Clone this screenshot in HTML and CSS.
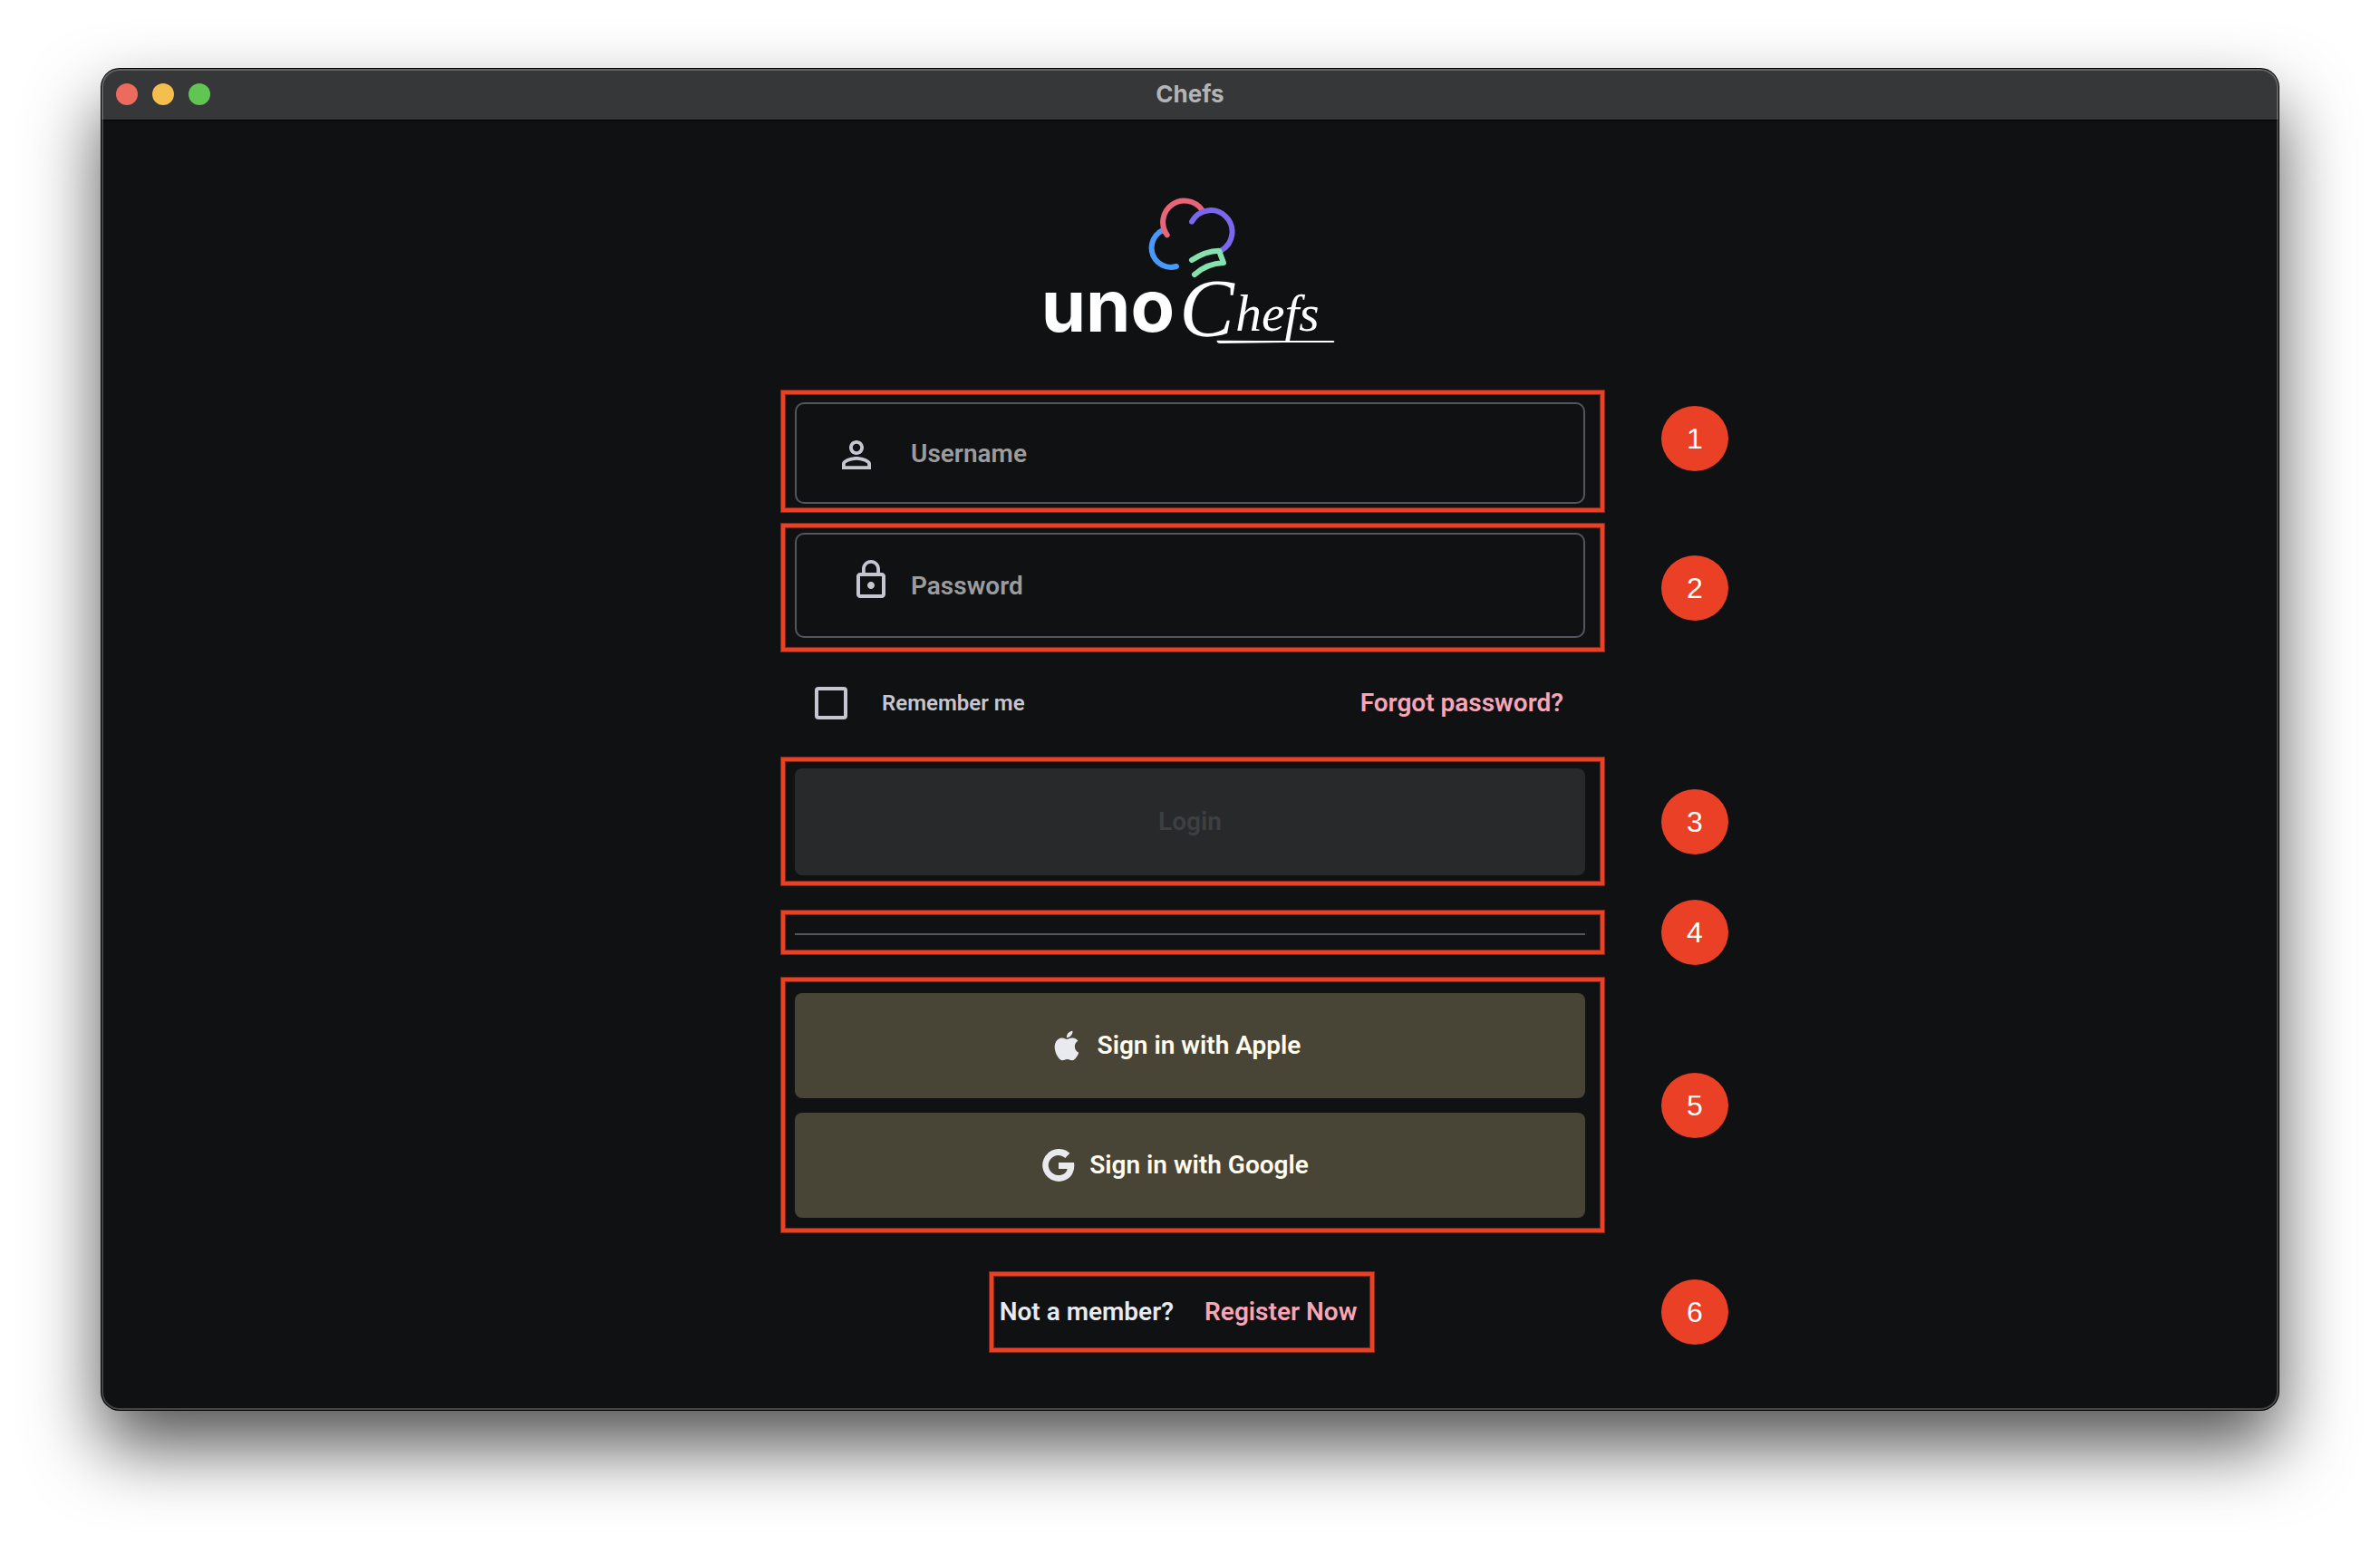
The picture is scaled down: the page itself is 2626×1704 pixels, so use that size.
FILE: index.html
```html
<!DOCTYPE html>
<html lang="en">
<head>
<meta charset="utf-8">
<meta name="viewport" content="width=device-width, initial-scale=1">
<title>Chefs</title>
<link rel="stylesheet" href="styles.css">
</head>
<body>
<div class="window">
  <header class="titlebar">
    <div class="lights">
      <span class="light light-close"></span>
      <span class="light light-minimize"></span>
      <span class="light light-zoom"></span>
    </div>
    <h1 class="title">Chefs</h1>
  </header>
  <main class="content">
    <svg class="logo" viewBox="0 0 1080 600" role="img" aria-label="Uno Chefs">
      <g fill="none" stroke-width="18">
        <path stroke="#4899fb" stroke-linecap="round" d="M456 164A64 64 0 0 0 504 282"/>
        <path stroke="#ea6478" stroke-linecap="round" d="M588 94A71 71 0 1 0 473 178"/>
        <path stroke="#7b67ee" stroke-linecap="round" d="M555 134A71 71 0 1 1 653 229"/>
        <path stroke="#85e2ae" stroke-linecap="round" stroke-linejoin="round" d="M555 261Q600 231 645 230L660 270Q605 272 564 309"/>
      </g>
      <text class="logo-uno" x="56" y="498">uno</text>
      <text class="logo-script logo-initial" x="514" y="512">C</text>
      <text class="logo-script" x="700" y="494">hefs</text>
      <path fill="#fff" d="M638 527L780 528L1024 528Q1030 531 1024 534L860 534L650 537Q636 536 638 527Z"/>
    </svg>

    <form class="form">
      <div class="row row-username">
        <div class="frame">
          <div class="field">
            <label class="field-icon" for="username" aria-label="Username">
              <svg viewBox="0 0 24 24"><path d="M12 5.9a2.1 2.1 0 1 1 0 4.2 2.1 2.1 0 0 1 0-4.2m0 9c2.97 0 6.1 1.46 6.1 2.1v1.1H5.9V17c0-.64 3.13-2.1 6.1-2.1M12 4C9.790 4 8 5.790 8 8s1.790 4 4 4 4-1.790 4-4-1.790-4-4-4zm0 9c-2.670 0-8 1.340-8 4v3h16v-3c0-2.660-5.330-4-8-4z"/></svg>
            </label>
            <input class="field-input" id="username" type="text" placeholder="Username">
          </div>
        </div>
        <span class="badge">1</span>
      </div>

      <div class="row row-password">
        <div class="frame">
          <div class="field">
            <label class="field-icon" for="password" aria-label="Password">
              <svg viewBox="0 0 24 24"><path d="M12 17c1.100 0 2-.900 2-2s-.900-2-2-2-2 .900-2 2 .900 2 2 2zm6-9h-1V6c0-2.760-2.240-5-5-5S7 3.240 7 6v2H6c-1.100 0-2 .900-2 2v10c0 1.100.900 2 2 2h12c1.100 0 2-.900 2-2V10c0-1.100-.900-2-2-2zM8.900 6c0-1.710 1.390-3.100 3.100-3.100s3.100 1.390 3.100 3.100v2H8.900V6zM18 20H6V10h12v10z"/></svg>
            </label>
            <input class="field-input" id="password" type="password" placeholder="Password">
          </div>
        </div>
        <span class="badge">2</span>
      </div>

      <div class="row row-options">
        <div class="options">
          <input class="checkbox" id="remember" type="checkbox">
          <label class="remember" for="remember">Remember me</label>
          <a class="link" href="#forgot">Forgot password?</a>
        </div>
      </div>

      <div class="row row-login">
        <div class="frame">
          <button class="button button-login" type="submit" disabled>Login</button>
        </div>
        <span class="badge">3</span>
      </div>

      <div class="row row-divider">
        <div class="frame"><hr class="divider"></div>
        <span class="badge">4</span>
      </div>

      <div class="row row-social">
        <div class="frame">
          <button class="button button-social" type="button">
            <svg class="brand" viewBox="1 1 22 22"><path d="M18.710 19.500C17.880 20.740 17 21.950 15.660 21.970C14.320 22 13.890 21.180 12.370 21.180C10.840 21.180 10.370 21.950 9.100 22C7.790 22.050 6.800 20.680 5.960 19.470C4.250 17 2.940 12.450 4.700 9.390C5.570 7.870 7.130 6.910 8.820 6.880C10.100 6.860 11.320 7.750 12.110 7.750C12.890 7.750 14.370 6.680 15.920 6.840C16.570 6.870 18.390 7.100 19.560 8.820C19.470 8.880 17.390 10.100 17.410 12.630C17.440 15.650 20.060 16.660 20.090 16.670C20.060 16.740 19.670 18.110 18.710 19.500M13 3.500C13.730 2.670 14.940 2.040 15.940 2C16.070 3.170 15.600 4.350 14.900 5.190C14.210 6.040 13.070 6.700 11.950 6.610C11.800 5.460 12.360 4.260 13 3.500Z"/></svg>
            Sign in with Apple
          </button>
          <button class="button button-social" type="button">
            <svg class="brand" viewBox="0 0 106 108"><path d="M90 14A54 54 0 1 0 53 108C84 108 105 86 105 55Q105 50 104 45H53V66H82C79 80 68 87 53 87A33 33 0 1 1 75 30Z"/></svg>
            Sign in with Google
          </button>
        </div>
        <span class="badge">5</span>
      </div>

      <div class="row row-register">
        <div class="frame">
          <span>Not a member?</span>
          <a class="link" href="#register">Register Now</a>
        </div>
        <span class="badge">6</span>
      </div>
    </form>
  </main>
</div>
</body>
</html>
```
FILE: styles.css
```css
:root {
  --surface: #0f1113;
  --outline: #55565d;
  --icon: #c5c6d0;
  --accent: #f5a6b7;
  --mark: #ea4025;
  --mark-edge: #84281a;
}

* {
  box-sizing: border-box;
}

body {
  margin: 0;
  padding: 76px 112px 148px;
  background: #fff;
  font-family: Roboto, "Liberation Sans", sans-serif;
  font-size: 28px;
  font-weight: 600;
  line-height: 40px;
  color: #e8eaee;
}

/* Window chrome */

.window {
  position: relative;
  display: flex;
  flex-direction: column;
  min-height: calc(100vh - 224px);
  border-radius: 20px;
  background: var(--surface);
  box-shadow: 0 0 0 1px #000, 0 40px 80px rgba(0, 0, 0, 0.68);
  overflow: hidden;
}

.window::after {
  content: "";
  position: absolute;
  inset: 0;
  border-radius: 20px;
  box-shadow: inset 0 0 0 2px rgba(255, 255, 255, 0.22);
  pointer-events: none;
}

.titlebar {
  display: grid;
  grid-template-columns: 1fr auto 1fr;
  align-items: center;
  height: 57px;
  padding: 0 16px;
  border-bottom: 1px solid #000;
  background: #363739;
}

.lights {
  display: flex;
  gap: 16px;
}

.light {
  width: 24px;
  height: 24px;
  border-radius: 50%;
}

.light-close { background: #ed6a5e; }
.light-minimize { background: #f5bf4f; }
.light-zoom { background: #61c554; }

.title {
  margin: 0;
  font-family: Inter, "Liberation Sans", sans-serif;
  font-size: 26px;
  font-weight: 700;
  color: #b3b4b5;
}

/* Logo */

.content {
  display: flex;
  flex-direction: column;
  align-items: center;
  padding: 67px 0 63px;
}

.logo {
  width: 360px;
  height: 200px;
  margin-right: 6px;
}

.logo text {
  fill: #fff;
}

.logo-uno {
  font-family: Inter, sans-serif;
  font-size: 238px;
  font-weight: 700;
}

.logo-script {
  font-family: "Liberation Serif", serif;
  font-size: 172px;
  font-style: italic;
  font-weight: 400;
}

.logo-initial {
  font-size: 272px;
}

/* Sign-in form */

.form {
  align-self: stretch;
  margin-top: 30px;
}

.row {
  display: grid;
  grid-template-columns: 1fr 910px 1fr;
  align-items: center;
  padding-left: 6px;
}

.frame {
  grid-column: 2;
  padding: 13px 22px 12px 16px;
  box-shadow:
    inset 0 0 0 1px var(--mark-edge),
    inset 0 0 0 5px var(--mark),
    inset 0 0 0 6px var(--mark-edge);
}

.badge {
  display: flex;
  align-items: center;
  justify-content: center;
  width: 74px;
  height: 72px;
  margin-left: 62px;
  border-radius: 50%;
  background: var(--mark);
  font-family: "Liberation Sans", sans-serif;
  font-size: 32px;
  font-weight: 400;
  color: #fff;
}

.row-username .frame { padding-top: 14px; padding-bottom: 10px; }
.row-username .badge { align-self: start; margin-top: 18px; }
.row-password { margin-top: 11px; }
.row-password .frame { padding-top: 11px; padding-bottom: 16px; }

.field {
  display: grid;
  grid-template-columns: 84px 1fr;
  align-items: center;
  height: 112px;
  padding-left: 42px;
  border: 2px solid var(--outline);
  border-radius: 10px;
}

.row-password .field {
  height: 116px;
}

.field-icon {
  display: flex;
  padding-top: 4px;
}

.row-password .field-icon {
  padding: 0 0 12px 16px;
}

.field-icon svg {
  width: 48px;
  height: 48px;
  fill: var(--icon);
}

.field-input {
  width: 100%;
  height: 100%;
  padding: 0;
  border: 0;
  outline: 0;
  background: transparent;
  font: inherit;
  color: inherit;
}

.field-input::placeholder {
  color: #9b9c9e;
  opacity: 1;
}

.row-options {
  height: 115px;
}

.options {
  grid-column: 2;
  display: flex;
  align-items: center;
  padding: 0 46px 4px 38px;
}

.checkbox {
  width: 36px;
  height: 36px;
  margin: 0 38px 0 0;
  appearance: none;
  border: 4px solid var(--icon);
  border-radius: 4px;
}

.remember {
  flex: 1;
  font-size: 24px;
  color: var(--icon);
}

.link {
  color: var(--accent);
  text-decoration: none;
}

.button {
  display: flex;
  align-items: center;
  justify-content: center;
  gap: 16px;
  width: 100%;
  height: 116px;
  padding: 0;
  border: 0;
  border-radius: 8px;
  font: inherit;
}

.button-login {
  height: 118px;
  background: #28292b;
  color: #3e3f41;
}

/* The badge is taller than this frame, so it sets the row's height */
.row-divider { margin-top: 15px; }
.row-divider .frame { padding-top: 26px; padding-bottom: 22px; }

.divider {
  height: 2px;
  margin: 0;
  border: 0;
  background: var(--outline);
}

.row-social { margin-top: 13px; }

.row-social .frame {
  display: grid;
  gap: 16px;
  padding-top: 18px;
  padding-bottom: 17px;
}

.button-social {
  padding-right: 32px;
  background: #494536;
  color: #fffcef;
}

.brand {
  width: 36px;
  height: 36px;
  fill: #e9eaf0;
}

.row-register { margin-top: 42px; }

.row-register .frame {
  display: flex;
  justify-self: center;
  gap: 34px;
  margin-right: 24px;
  padding: 25px 20px 25px 12px;
}
```
